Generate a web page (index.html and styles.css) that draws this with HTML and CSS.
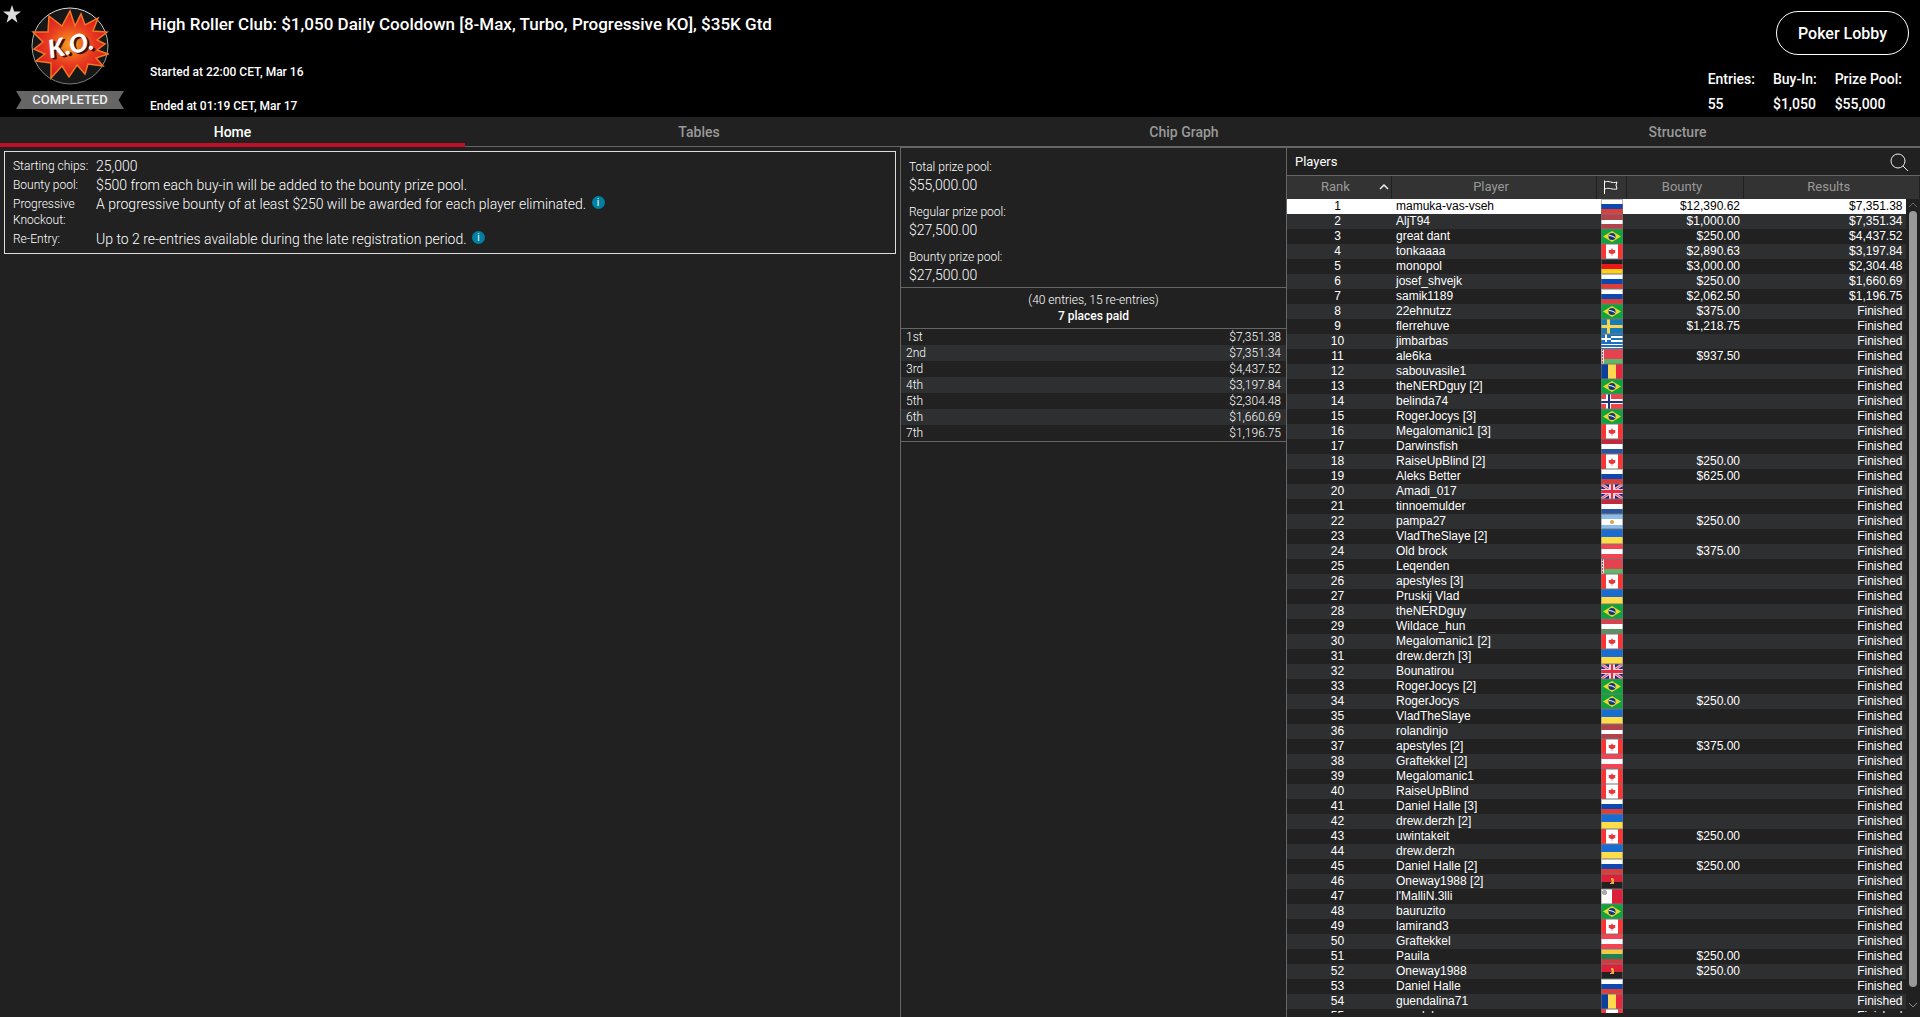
FILE: index.html
```html
<!DOCTYPE html>
<html lang="en">
<head>
  <meta charset="UTF-8" />
  <title>High Roller Club: $1,050 Daily Cooldown</title>
  <link rel="stylesheet" href="styles.css">
</head>
<body>

  <!-- Flags -->
  <svg class="defs" aria-hidden="true">
    <symbol id="ru" viewBox="0 0 22 15"><path fill="#fff" d="M0 0h22v5H0z"/><path fill="#0d47b0" d="M0 5h22v5H0z"/><path fill="#e03c38" d="M0 10h22v5H0z"/></symbol>
    <symbol id="lv" viewBox="0 0 22 15"><path fill="#b0434c" d="M0 0h22v15H0z"/><path fill="#fff" d="M0 6h22v4H0z"/></symbol>
    <symbol id="br" viewBox="0 0 22 15"><path fill="#10a33c" d="M0 0h22v15H0z"/><path fill="#e8d92e" d="M11 2l9 5.500-9 5.500-9-5.500z"/><circle cx="11" cy="7.500" r="3.500" fill="#12357a"/><path stroke="#fff" d="M8 6.500q3 0 6 2" fill="none"/></symbol>
    <symbol id="ca" viewBox="0 0 22 15"><path fill="#fff" d="M0 0h22v15H0z"/><path fill="#f33" d="M0 0h5v15H0zM17 0h5v15h-5z"/><path fill="#e8383c" d="M11 4l1 2 2.500 0-.5 1.500.5 1-2.500 1.500h-.7V12h-.6v-2H10L7.500 8.500l.5-1L7.500 6 10 6z"/></symbol>
    <symbol id="de" viewBox="0 0 22 15"><path fill="#222" d="M0 0h22v5H0z"/><path fill="#e81818" d="M0 5h22v5H0z"/><path fill="#fdd020" d="M0 10h22v5H0z"/></symbol>
    <symbol id="se" viewBox="0 0 22 15"><path fill="#1a7ab4" d="M0 0h22v15H0z"/><path fill="#f5d552" d="M6 0h3v15H6zM0 6h22v3H0z"/></symbol>
    <symbol id="gr" viewBox="0 0 22 15"><path fill="#1c6fc0" d="M0 0h22v15H0z"/><path fill="#fff" d="M10 2h12v2H10zM10 6h12v2H10zM0 10h22v1H0zM0 13h22v1H0zM4 0h2v8H4zM0 4h10v2H0z"/></symbol>
    <symbol id="by" viewBox="0 0 22 15"><path fill="#e5424f" d="M0 0h22v10H0z"/><path fill="#5fb866" d="M0 10h22v5H0z"/><path fill="#f3dede" d="M0 0h3v15H0z"/><path stroke="#c8404a" stroke-dasharray="2 1" d="M1.500 0v15"/></symbol>
    <symbol id="ro" viewBox="0 0 22 15"><path fill="#0a3f9c" d="M0 0h7v15H0z"/><path fill="#ffd850" d="M7 0h8v15H7z"/><path fill="#e42840" d="M15 0h7v15h-7z"/></symbol>
    <symbol id="no" viewBox="0 0 22 15"><path fill="#ee4448" d="M0 0h22v15H0z"/><path fill="#fff" d="M5 0h5v15H5zM0 5h22v5H0z"/><path fill="#20307c" d="M7 0h2v15H7zM0 7h22v2H0z"/></symbol>
    <symbol id="nl" viewBox="0 0 22 15"><path fill="#c02a3c" d="M0 0h22v5H0z"/><path fill="#fff" d="M0 5h22v5H0z"/><path fill="#2c54a0" d="M0 10h22v5H0z"/></symbol>
    <symbol id="gb" viewBox="0 0 22 15"><path fill="#1c1c7c" d="M0 0h22v15H0z"/><path stroke="#f4c8d8" stroke-width="3" d="M0 0l22 15M22 0L0 15"/><path stroke="#e03850" d="M0 0l22 15M22 0L0 15"/><path fill="#f4d4e0" d="M8 0h6v15H8zM0 5h22v5H0z"/><path fill="#e22c40" d="M10 0h2v15h-2zM0 6h22v3H0z"/></symbol>
    <symbol id="ar" viewBox="0 0 22 15"><path fill="#8abce8" d="M0 0h22v15H0z"/><path fill="#fff" d="M0 5h22v6H0z"/><circle cx="11" cy="8" r="2" fill="#e0a040"/></symbol>
    <symbol id="ua" viewBox="0 0 22 15"><path fill="#1a6cd0" d="M0 0h22v8H0z"/><path fill="#ffdc4a" d="M0 8h22v7H0z"/></symbol>
    <symbol id="at" viewBox="0 0 22 15"><path fill="#f24452" d="M0 0h22v15H0z"/><path fill="#fff" d="M0 5h22v5H0z"/></symbol>
    <symbol id="hu" viewBox="0 0 22 15"><path fill="#d8424e" d="M0 0h22v5H0z"/><path fill="#fff" d="M0 5h22v5H0z"/><path fill="#5c9064" d="M0 10h22v5H0z"/></symbol>
    <symbol id="ao" viewBox="0 0 22 15"><path fill="#dc2038" d="M0 0h22v8H0z"/><path fill="#222" d="M0 8h22v7H0z"/><path fill="#f0b040" d="M10 4h2l1 2v4H9V9h1l1-2-1-1z"/></symbol>
    <symbol id="mt" viewBox="0 0 22 15"><path fill="#fff" d="M0 0h11v15H0z"/><path fill="#dc203c" d="M11 0h11v15H11z"/><path fill="#aaa" d="M2 1h3v5H2zM1 2h5v3H1z"/></symbol>
    <symbol id="lt" viewBox="0 0 22 15"><path fill="#f4c848" d="M0 0h22v5H0z"/><path fill="#1c8450" d="M0 5h22v5H0z"/><path fill="#d43840" d="M0 10h22v5H0z"/></symbol>
  </svg>

  <header class="header">
    <button class="star" aria-label="Favourite">
      <svg viewBox="0 0 18 18" width="18" height="18"><path fill="#ddd" d="M9 0l2.200 6.500H18l-5.500 4.200 2 7L9 13.500l-5.500 4.200 2-7L0 6.500h6.800z"/></svg>
    </button>
    <div class="badge">
      <svg viewBox="0 0 78 78" width="78" height="78">
        <defs>
          <radialGradient id="burst"><stop offset="0" stop-color="#f9a01b"/><stop offset=".6" stop-color="#e83c20"/><stop offset="1" stop-color="#d91a20"/></radialGradient>
          <linearGradient id="ring" x2="0" y2="1"><stop offset="0" stop-color="#ddd"/><stop offset="1" stop-color="#777"/></linearGradient>
        </defs>
        <circle cx="39" cy="39" r="38" fill="#171717" stroke="url(#ring)"/>
        <path fill="url(#burst)" stroke="#f07822" stroke-width="1.500" d="M18 9L31 19 39 4 44 19 50 7 54 18 67 11 62 24 76 25 66 33 74 37 66 43 77 47 65 51 72 59 57 57 54 67 46 58 38 70 31 59 20 71 20 56 5 54 14 47 3 42 12 35 2 25 17 25z"/>
        <g class="ko" transform="rotate(-12 39 40)">
          <text x="19" y="49" fill="#401010">K.O.</text>
          <text x="17" y="47" fill="#fff">K.O.</text>
        </g>
      </svg>
      <div class="ribbon">COMPLETED</div>
    </div>
    <div class="event">
      <h1>High Roller Club: $1,050 Daily Cooldown [8-Max, Turbo, Progressive KO], $35K Gtd</h1>
      <p>Started at 22:00 CET, Mar 16</p>
      <p>Ended at 01:19 CET, Mar 17</p>
    </div>
    <div class="summary">
      <button class="lobby">Poker Lobby</button>
      <dl>
        <div><dt>Entries:</dt><dd>55</dd></div>
        <div><dt>Buy-In:</dt><dd>$1,050</dd></div>
        <div><dt>Prize Pool:</dt><dd>$55,000</dd></div>
      </dl>
    </div>
  </header>

  <nav class="tabs">
    <a class="active" href="#home">Home</a>
    <a href="#tables">Tables</a>
    <a href="#chips">Chip Graph</a>
    <a href="#structure">Structure</a>
  </nav>

  <main class="main">
    <section class="info">
      <dl>
        <dt>Starting chips:</dt><dd>25,000</dd>
        <dt>Bounty pool:</dt><dd>$500 from each buy-in will be added to the bounty prize pool.</dd>
        <dt>Progressive Knockout:</dt><dd>A progressive bounty of at least $250 will be awarded for each player eliminated. <span class="tip">i</span></dd>
        <dt>Re-Entry:</dt><dd>Up to 2 re-entries available during the late registration period. <span class="tip">i</span></dd>
      </dl>
    </section>

    <section class="prizes">
      <dl class="pools">
        <dt>Total prize pool:</dt><dd>$55,000.00</dd>
        <dt>Regular prize pool:</dt><dd>$27,500.00</dd>
        <dt>Bounty prize pool:</dt><dd>$27,500.00</dd>
      </dl>
      <div class="places">
        <p>(40 entries, 15 re-entries)</p>
        <p class="paid">7 places paid</p>
      </div>
      <table class="payouts">
        <tr><td>1st</td><td>$7,351.38</td></tr>
        <tr><td>2nd</td><td>$7,351.34</td></tr>
        <tr><td>3rd</td><td>$4,437.52</td></tr>
        <tr><td>4th</td><td>$3,197.84</td></tr>
        <tr><td>5th</td><td>$2,304.48</td></tr>
        <tr><td>6th</td><td>$1,660.69</td></tr>
        <tr><td>7th</td><td>$1,196.75</td></tr>
      </table>
    </section>

    <section class="players">
      <div class="players-bar">
        <h2>Players</h2>
        <button class="search" aria-label="Search">
          <svg viewBox="0 0 18 18" width="18" height="18"><g fill="none" stroke="#eee"><circle cx="8" cy="8" r="7"/><path d="M13 13l5 5"/></g></svg>
        </button>
      </div>
      <div class="list">
        <table>
          <colgroup><col class="c-rank"><col class="c-player"><col class="c-flag"><col class="c-bounty"><col><col class="c-gutter"></colgroup>
          <thead>
            <tr>
              <th><span class="sort">Rank <svg viewBox="0 0 10 6" width="10" height="6"><path fill="none" stroke="#eee" stroke-width="1.500" d="M1 5l4-4 4 4"/></svg></span></th>
              <th>Player</th>
              <th><svg class="flag-head" viewBox="0 0 14 14" width="14" height="14"><path fill="none" stroke="#fff" d="M.5 14V.5M1 2c4-2 7 2 12 0l-1 3 1 4c-5 1-8-2-12 0"/></svg></th>
              <th>Bounty</th>
              <th colspan="2">Results</th>
            </tr>
          </thead>
          <tbody>
            <tr class="selected"><td>1</td><td>mamuka-vas-vseh</td><td><svg class="flag"><use href="#ru"/></svg></td><td>$12,390.62</td><td>$7,351.38</td></tr>
            <tr><td>2</td><td>AljT94</td><td><svg class="flag"><use href="#lv"/></svg></td><td>$1,000.00</td><td>$7,351.34</td></tr>
            <tr><td>3</td><td>great dant</td><td><svg class="flag"><use href="#br"/></svg></td><td>$250.00</td><td>$4,437.52</td></tr>
            <tr><td>4</td><td>tonkaaaa</td><td><svg class="flag"><use href="#ca"/></svg></td><td>$2,890.63</td><td>$3,197.84</td></tr>
            <tr><td>5</td><td>monopol</td><td><svg class="flag"><use href="#de"/></svg></td><td>$3,000.00</td><td>$2,304.48</td></tr>
            <tr><td>6</td><td>josef_shvejk</td><td><svg class="flag"><use href="#ru"/></svg></td><td>$250.00</td><td>$1,660.69</td></tr>
            <tr><td>7</td><td>samik1189</td><td><svg class="flag"><use href="#ru"/></svg></td><td>$2,062.50</td><td>$1,196.75</td></tr>
            <tr><td>8</td><td>22ehnutzz</td><td><svg class="flag"><use href="#br"/></svg></td><td>$375.00</td><td>Finished</td></tr>
            <tr><td>9</td><td>flerrehuve</td><td><svg class="flag"><use href="#se"/></svg></td><td>$1,218.75</td><td>Finished</td></tr>
            <tr><td>10</td><td>jimbarbas</td><td><svg class="flag"><use href="#gr"/></svg></td><td></td><td>Finished</td></tr>
            <tr><td>11</td><td>ale6ka</td><td><svg class="flag"><use href="#by"/></svg></td><td>$937.50</td><td>Finished</td></tr>
            <tr><td>12</td><td>sabouvasile1</td><td><svg class="flag"><use href="#ro"/></svg></td><td></td><td>Finished</td></tr>
            <tr><td>13</td><td>theNERDguy [2]</td><td><svg class="flag"><use href="#br"/></svg></td><td></td><td>Finished</td></tr>
            <tr><td>14</td><td>belinda74</td><td><svg class="flag"><use href="#no"/></svg></td><td></td><td>Finished</td></tr>
            <tr><td>15</td><td>RogerJocys [3]</td><td><svg class="flag"><use href="#br"/></svg></td><td></td><td>Finished</td></tr>
            <tr><td>16</td><td>Megalomanic1 [3]</td><td><svg class="flag"><use href="#ca"/></svg></td><td></td><td>Finished</td></tr>
            <tr><td>17</td><td>Darwinsfish</td><td><svg class="flag"><use href="#nl"/></svg></td><td></td><td>Finished</td></tr>
            <tr><td>18</td><td>RaiseUpBlind [2]</td><td><svg class="flag"><use href="#ca"/></svg></td><td>$250.00</td><td>Finished</td></tr>
            <tr><td>19</td><td>Aleks Better</td><td><svg class="flag"><use href="#ru"/></svg></td><td>$625.00</td><td>Finished</td></tr>
            <tr><td>20</td><td>Amadi_017</td><td><svg class="flag"><use href="#gb"/></svg></td><td></td><td>Finished</td></tr>
            <tr><td>21</td><td>tinnoemulder</td><td><svg class="flag"><use href="#nl"/></svg></td><td></td><td>Finished</td></tr>
            <tr><td>22</td><td>pampa27</td><td><svg class="flag"><use href="#ar"/></svg></td><td>$250.00</td><td>Finished</td></tr>
            <tr><td>23</td><td>VladTheSlaye [2]</td><td><svg class="flag"><use href="#ua"/></svg></td><td></td><td>Finished</td></tr>
            <tr><td>24</td><td>Old brock</td><td><svg class="flag"><use href="#at"/></svg></td><td>$375.00</td><td>Finished</td></tr>
            <tr><td>25</td><td>Leqenden</td><td><svg class="flag"><use href="#by"/></svg></td><td></td><td>Finished</td></tr>
            <tr><td>26</td><td>apestyles [3]</td><td><svg class="flag"><use href="#ca"/></svg></td><td></td><td>Finished</td></tr>
            <tr><td>27</td><td>Pruskij Vlad</td><td><svg class="flag"><use href="#ua"/></svg></td><td></td><td>Finished</td></tr>
            <tr><td>28</td><td>theNERDguy</td><td><svg class="flag"><use href="#br"/></svg></td><td></td><td>Finished</td></tr>
            <tr><td>29</td><td>Wildace_hun</td><td><svg class="flag"><use href="#hu"/></svg></td><td></td><td>Finished</td></tr>
            <tr><td>30</td><td>Megalomanic1 [2]</td><td><svg class="flag"><use href="#ca"/></svg></td><td></td><td>Finished</td></tr>
            <tr><td>31</td><td>drew.derzh [3]</td><td><svg class="flag"><use href="#ua"/></svg></td><td></td><td>Finished</td></tr>
            <tr><td>32</td><td>Bounatirou</td><td><svg class="flag"><use href="#gb"/></svg></td><td></td><td>Finished</td></tr>
            <tr><td>33</td><td>RogerJocys [2]</td><td><svg class="flag"><use href="#br"/></svg></td><td></td><td>Finished</td></tr>
            <tr><td>34</td><td>RogerJocys</td><td><svg class="flag"><use href="#br"/></svg></td><td>$250.00</td><td>Finished</td></tr>
            <tr><td>35</td><td>VladTheSlaye</td><td><svg class="flag"><use href="#ua"/></svg></td><td></td><td>Finished</td></tr>
            <tr><td>36</td><td>rolandinjo</td><td><svg class="flag"><use href="#lv"/></svg></td><td></td><td>Finished</td></tr>
            <tr><td>37</td><td>apestyles [2]</td><td><svg class="flag"><use href="#ca"/></svg></td><td>$375.00</td><td>Finished</td></tr>
            <tr><td>38</td><td>Graftekkel [2]</td><td><svg class="flag"><use href="#at"/></svg></td><td></td><td>Finished</td></tr>
            <tr><td>39</td><td>Megalomanic1</td><td><svg class="flag"><use href="#ca"/></svg></td><td></td><td>Finished</td></tr>
            <tr><td>40</td><td>RaiseUpBlind</td><td><svg class="flag"><use href="#ca"/></svg></td><td></td><td>Finished</td></tr>
            <tr><td>41</td><td>Daniel Halle [3]</td><td><svg class="flag"><use href="#ru"/></svg></td><td></td><td>Finished</td></tr>
            <tr><td>42</td><td>drew.derzh [2]</td><td><svg class="flag"><use href="#ua"/></svg></td><td></td><td>Finished</td></tr>
            <tr><td>43</td><td>uwintakeit</td><td><svg class="flag"><use href="#ca"/></svg></td><td>$250.00</td><td>Finished</td></tr>
            <tr><td>44</td><td>drew.derzh</td><td><svg class="flag"><use href="#ua"/></svg></td><td></td><td>Finished</td></tr>
            <tr><td>45</td><td>Daniel Halle [2]</td><td><svg class="flag"><use href="#ru"/></svg></td><td>$250.00</td><td>Finished</td></tr>
            <tr><td>46</td><td>Oneway1988 [2]</td><td><svg class="flag"><use href="#ao"/></svg></td><td></td><td>Finished</td></tr>
            <tr><td>47</td><td>l'MalliN.3lli</td><td><svg class="flag"><use href="#mt"/></svg></td><td></td><td>Finished</td></tr>
            <tr><td>48</td><td>bauruzito</td><td><svg class="flag"><use href="#br"/></svg></td><td></td><td>Finished</td></tr>
            <tr><td>49</td><td>lamirand3</td><td><svg class="flag"><use href="#ca"/></svg></td><td></td><td>Finished</td></tr>
            <tr><td>50</td><td>Graftekkel</td><td><svg class="flag"><use href="#at"/></svg></td><td></td><td>Finished</td></tr>
            <tr><td>51</td><td>Pauila</td><td><svg class="flag"><use href="#lt"/></svg></td><td>$250.00</td><td>Finished</td></tr>
            <tr><td>52</td><td>Oneway1988</td><td><svg class="flag"><use href="#ao"/></svg></td><td>$250.00</td><td>Finished</td></tr>
            <tr><td>53</td><td>Daniel Halle</td><td><svg class="flag"><use href="#ru"/></svg></td><td></td><td>Finished</td></tr>
            <tr><td>54</td><td>guendalina71</td><td><svg class="flag"><use href="#ro"/></svg></td><td></td><td>Finished</td></tr>
            <tr><td>55</td><td>sunelol</td><td><svg class="flag"><use href="#ca"/></svg></td><td></td><td>Finished</td></tr>
          </tbody>
        </table>
        <div class="scrollbar">
          <svg viewBox="0 0 10 12" width="10" height="12"><path fill="none" stroke="#666" d="M1 8l4-4 4 4"/></svg>
          <div class="thumb"></div>
          <svg viewBox="0 0 10 12" width="10" height="12"><path fill="none" stroke="#888" d="M1 4l4 4 4-4"/></svg>
        </div>
      </div>
    </section>
  </main>

</body>
</html>
```
FILE: styles.css
```css
* {
  box-sizing: border-box;
}

body {
  margin: 0;
  height: 100vh;
  display: flex;
  flex-direction: column;
  overflow: hidden;
  background: #212121;
  color: #fff;
  font-family: Roboto, sans-serif;
  font-size: 14px;
}

h1, h2, p, dl, dd {
  margin: 0;
}

button {
  padding: 0;
  border: 0;
  background: none;
  color: inherit;
  font: inherit;
}

svg {
  display: block;
}

table {
  width: 100%;
  border-collapse: collapse;
}

.defs {
  position: absolute;
  width: 0;
  height: 0;
}

/* Header */
.header {
  position: relative;
  display: flex;
  height: 117px;
  padding-left: 16px;
  background: #000;
  font-weight: 500;
}

.star {
  position: absolute;
  left: 3px;
  top: 5px;
}

.badge {
  display: flex;
  flex-direction: column;
  align-items: center;
  width: 108px;
  padding-top: 7px;
}

.ko text {
  font-family: Lato, sans-serif;
  font-size: 25px;
  font-style: italic;
  font-weight: 900;
}

.ribbon {
  width: 108px;
  margin-top: 6px;
  background: #666;
  clip-path: polygon(0 0, 100% 0, 95% 50%, 100% 100%, 0 100%, 5% 50%);
  color: #eee;
  font-size: 13px;
  line-height: 18px;
  text-align: center;
}

.event {
  flex: 1;
  padding: 12px 0 0 26px;
  font-size: 12px;
}

.event h1 {
  margin-bottom: 28px;
  font-size: 17px;
  font-weight: 500;
  line-height: 24px;
}

.event p {
  margin-bottom: 18px;
  line-height: 16px;
}

.summary {
  display: flex;
  flex-direction: column;
  align-items: flex-end;
  padding: 11px 11px 0 0;
}

.lobby {
  width: 133px;
  height: 44px;
  border: 1px solid #fff;
  border-radius: 22px;
  font-size: 16px;
}

.summary dl {
  display: flex;
  gap: 18px;
  margin: 12px 7px 0 0;
  line-height: 25px;
}

/* Tabs */
.tabs {
  display: grid;
  grid-template-columns: 465fr 468fr 502fr 485fr;
  height: 30px;
  border-bottom: 1px solid #666;
}

.tabs a {
  color: #999;
  font-weight: 500;
  line-height: 31px;
  text-align: center;
  text-decoration: none;
}

.tabs .active {
  height: 30px;
  border-bottom: 4px solid #c01028;
  color: #fff;
}

/* Columns */
.main {
  flex: 1;
  display: grid;
  grid-template-columns: 900fr 386fr 634fr;
  grid-template-rows: 100%;
  min-height: 0;
}

.info {
  padding: 4px;
}

.info dl {
  display: grid;
  grid-template-columns: 78px 1fr;
  gap: 3px 5px;
  padding: 6px 8px;
  border: 1px solid #ddd;
}

.info dt,
.info dd,
.pools,
.places,
.payouts {
  font-weight: 300;
}

.info dt {
  font-size: 12px;
  line-height: 16px;
}

.info dd {
  font-size: 14px;
  line-height: 16px;
}

.tip {
  display: inline-block;
  width: 13px;
  height: 13px;
  margin-left: 2px;
  border-radius: 50%;
  background: #0080a0;
  font-size: 10px;
  font-weight: 400;
  line-height: 13px;
  text-align: center;
  vertical-align: top;
}

.prizes,
.players {
  border-top: 1px solid #666;
  border-left: 1px solid #666;
}

.pools {
  padding: 10px 8px 3px;
  line-height: 18px;
}

.pools dt {
  font-size: 12px;
}

.pools dd {
  margin-bottom: 9px;
}

.pools dd:last-child {
  margin-bottom: 0;
}

.places {
  padding: 4px;
  border-top: 1px solid #666;
  border-bottom: 1px solid #666;
  font-size: 12px;
  line-height: 16px;
  text-align: center;
}

.paid {
  font-weight: 500;
}

.payouts {
  border-bottom: 1px solid #666;
  font-size: 12px;
  line-height: 16px;
}

.payouts td {
  padding: 0 5px;
}

.payouts td:last-child {
  text-align: right;
}

.payouts tr:nth-child(even) {
  background: #2d2f31;
}

/* Players */
.players {
  display: flex;
  flex-direction: column;
  min-height: 0;
  padding-bottom: 4px;
}

.players-bar {
  display: flex;
  align-items: center;
  justify-content: space-between;
  height: 28px;
  padding: 0 12px 0 8px;
  border-bottom: 1px solid #666;
}

.players-bar h2 {
  font-size: 13px;
  font-weight: 400;
}

.list {
  position: relative;
  flex: 1;
  min-height: 0;
  overflow: hidden;
  font-family: "Liberation Sans", Arial, sans-serif;
  font-size: 12px;
}

.list table {
  table-layout: fixed;
}

.c-rank {
  width: 104px;
}

.c-player {
  width: 205px;
}

.c-flag {
  width: 30px;
}

.c-bounty {
  width: 117px;
}

.c-gutter {
  width: 14px;
}

.list th {
  height: 23px;
  padding: 0 5px 2px 0;
  border-right: 1px solid #212121;
  background: #333;
  color: #999;
  font-family: Roboto, sans-serif;
  font-size: 13px;
  font-weight: 400;
}

.list th:nth-child(1),
.list th:nth-child(3) {
  padding-right: 0;
}

.sort {
  display: flex;
  align-items: center;
  justify-content: space-between;
  padding: 0 2px 0 34px;
}

.flag-head {
  margin: 0 auto;
}

.list td {
  height: 15px;
  padding: 0;
  line-height: 15px;
}

.list td:nth-child(1) {
  padding-right: 3px;
  text-align: center;
}

.list td:nth-child(2),
.list td:nth-child(3) {
  padding-left: 5px;
}

.list td:nth-child(4),
.list td:nth-child(5) {
  padding-right: 3px;
  text-align: right;
}

.list tr:nth-child(even) td {
  background: #2d2f31;
}

.list .selected td {
  background: #fff;
  color: #000;
}

.flag {
  width: 22px;
  height: 15px;
  outline: 1px solid rgba(120, 120, 120, 0.5);
  outline-offset: -1px;
}

.scrollbar {
  position: absolute;
  top: 23px;
  right: 2px;
  bottom: 2px;
  display: flex;
  flex-direction: column;
  align-items: center;
  width: 10px;
}

.thumb {
  flex: 1;
  width: 8px;
  margin-bottom: 12px;
  border-radius: 4px;
  background: #999;
}
```
